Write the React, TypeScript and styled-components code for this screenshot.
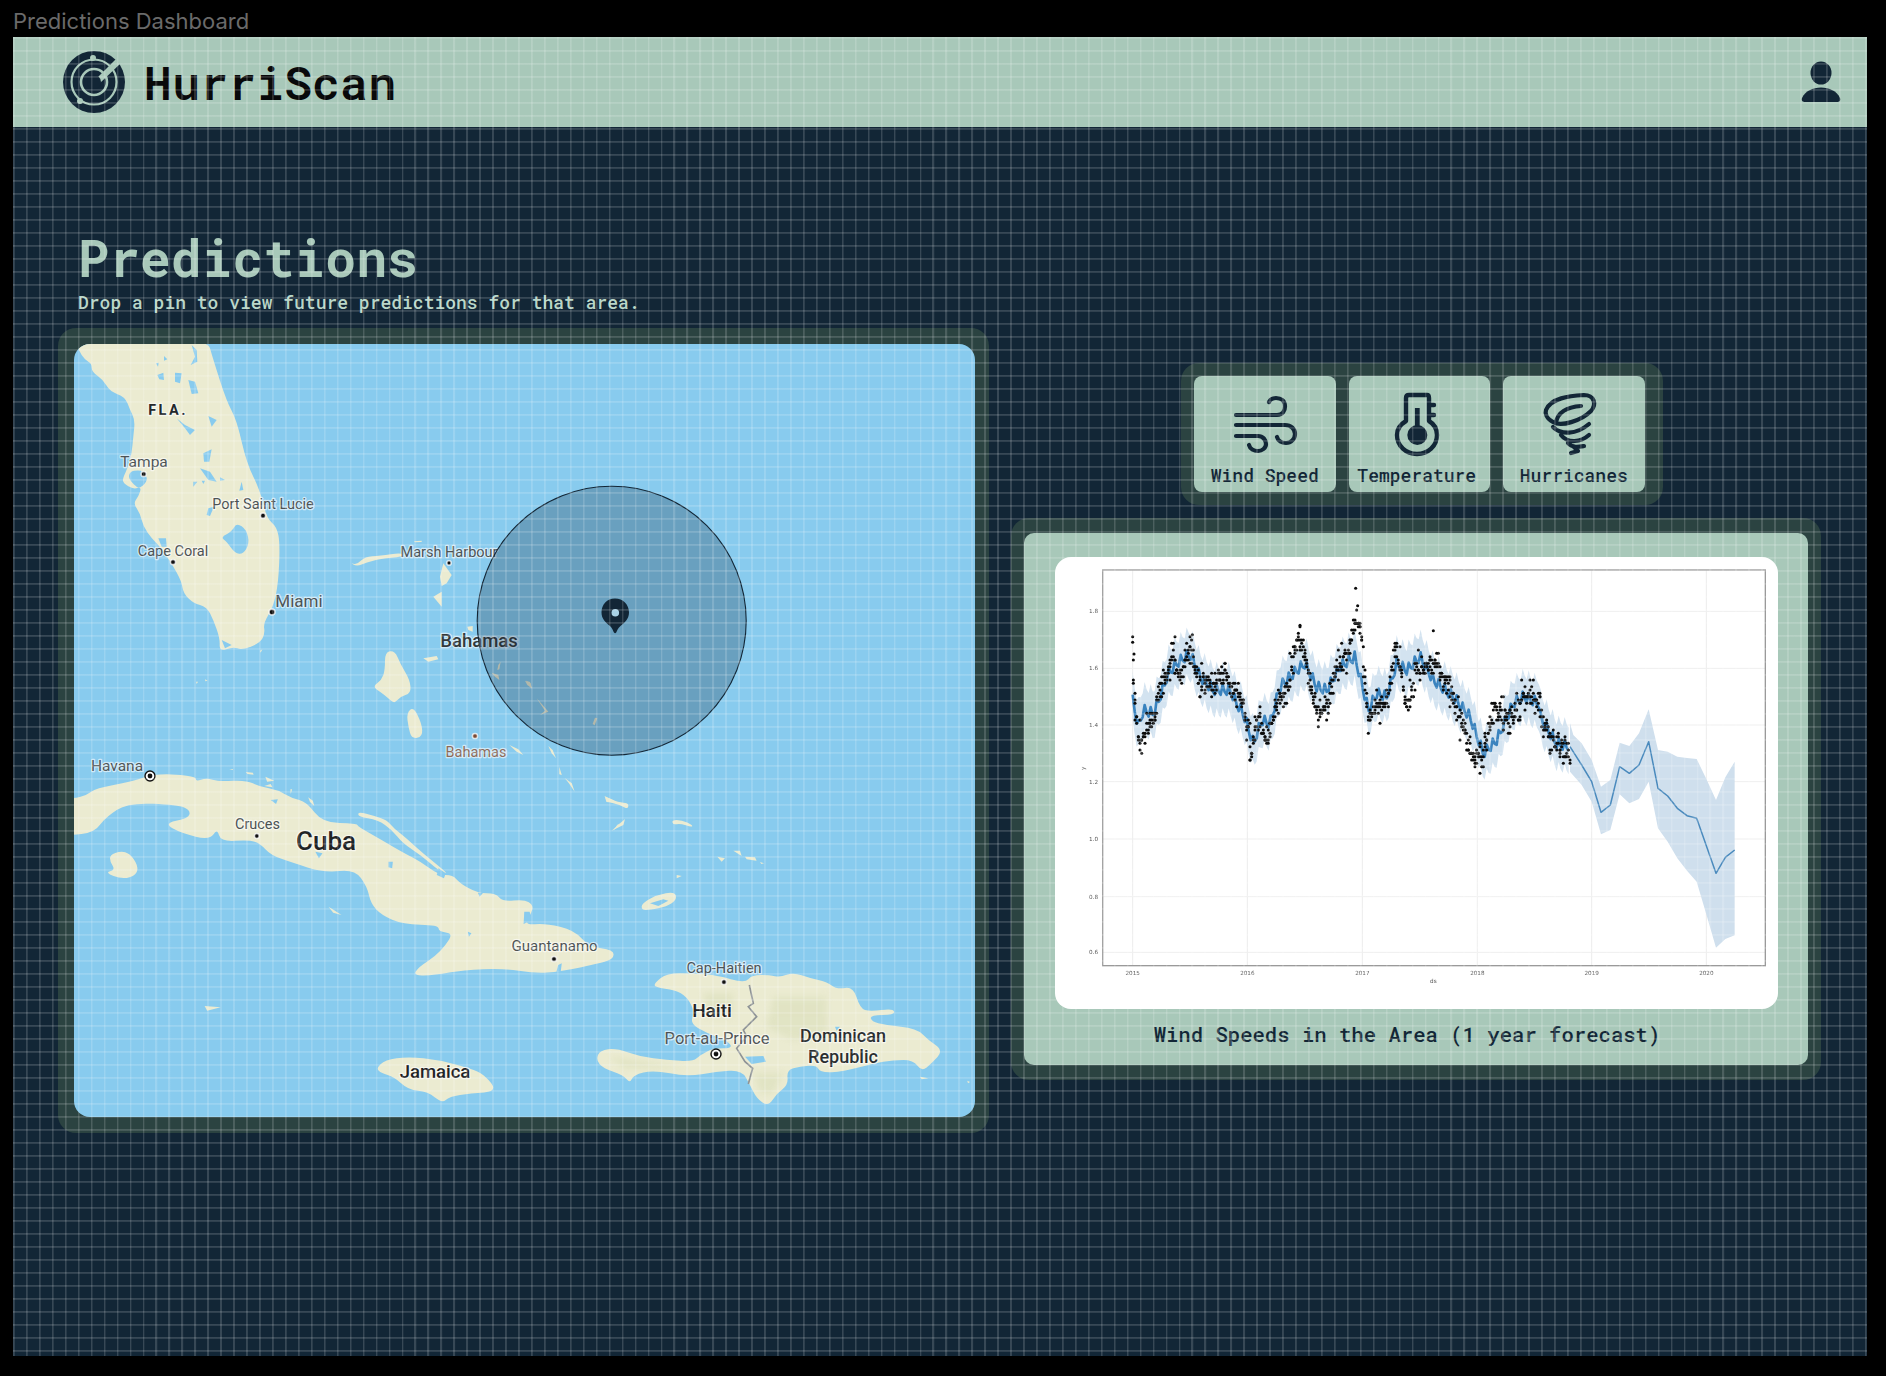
import styled, { createGlobalStyle } from "styled-components"

const NAVY = "#122636"
const SAGE = "#a8c8b9"
const PANEL = "#2b4341"
const MONO = `"Roboto Mono", "DejaVu Sans Mono", "Liberation Mono", monospace`

const GlobalStyle = createGlobalStyle`
  html, body { margin: 0; padding: 0; background: #000; }
`

const Page = styled.div`
  width: 1886px;
  height: 1376px;
  padding-left: 13px;
  box-sizing: border-box;
  background: #000;
  overflow: hidden;
`

const FrameLabel = styled.div`
  height: 37px;
  box-sizing: border-box;
  padding-top: 9px;
  font-family: Inter, "Liberation Sans", sans-serif;
  font-size: 22px;
  line-height: 24px;
  color: #6a6a6a;
`

const Frame = styled.div`
  position: relative;
  width: 1854px;
  height: 1319px;
  background: ${NAVY};
  overflow: hidden;
`

const GridOverlay = styled.div`
  position: absolute;
  inset: 0;
  pointer-events: none;
  background-image:
    repeating-linear-gradient(to right, rgba(255, 255, 255, 0.155) 0, rgba(255, 255, 255, 0.155) 1.3px, transparent 2.3px, transparent 12.95px),
    repeating-linear-gradient(to bottom, rgba(255, 255, 255, 0.155) 0, rgba(255, 255, 255, 0.155) 1.3px, transparent 2.3px, transparent 13px);
`

const Header = styled.header`
  height: 90px;
  box-sizing: border-box;
  padding: 0 26px 0 49px;
  display: flex;
  align-items: center;
  justify-content: space-between;
  background: ${SAGE};
`

const Brand = styled.div`
  display: flex;
  align-items: center;
  gap: 18px;
`

const BrandName = styled.div`
  font-family: ${MONO};
  font-size: 46.7px;
  font-weight: 600;
  line-height: 60px;
  color: #08090a;
`

const Main = styled.main`
  display: flex;
  gap: 22px;
  padding: 0 45px;
`

const LeftColumn = styled.div`
  width: 931px;
  flex: none;
`

const Heading = styled.div`
  height: 201px;
  box-sizing: border-box;
  padding: 101.5px 0 0 20px;
`

const Title = styled.h1`
  margin: 0;
  font-family: ${MONO};
  font-size: 51.5px;
  font-weight: 700;
  line-height: 56px;
  color: ${SAGE};
`

const Subtitle = styled.p`
  margin: 5.5px 0 0;
  font-family: ${MONO};
  font-size: 18px;
  font-weight: 500;
  line-height: 24px;
  color: #b9d6c8;
`

const MapPanel = styled.section`
  padding: 16px 14px 16px 16px;
  border-radius: 18px;
  background: ${PANEL};
`

const ChartPanel = styled.section`
  padding: 15px 13px;
  border-radius: 18px;
  background: ${PANEL};
`

const MapCard = styled.svg`
  display: block;
  width: 901px;
  height: 773px;
  border-radius: 16px;
  background: #88cbee;
`

const Land = styled.g`
  fill: #ebebd1;
  filter: blur(0.3px);
`

const Water = styled.g`
  fill: #88cbee;
`

const Relief = styled.g`
  fill: #d5dbb4;
  filter: blur(9px);
  opacity: 0.45;
`

const MapDot = styled.circle<{ $tone?: string }>`
  fill: ${(p) => p.$tone ?? "#111"};
  stroke: rgba(255, 255, 255, 0.75);
  stroke-width: 1.5px;
`

const CapitalRing = styled.circle`
  fill: #fff;
  stroke: #111;
  stroke-width: 1.4px;
`

const CapitalDot = styled.circle`
  fill: #111;
`

const MapLabel = styled.text<{ $size: number; $weight?: number; $tone?: string; $track?: number }>`
  font-family: Roboto, "Noto Sans", sans-serif;
  font-size: ${(p) => p.$size}px;
  font-weight: ${(p) => p.$weight ?? 400};
  fill: ${(p) => p.$tone ?? "#4c5254"};
  letter-spacing: ${(p) => p.$track ?? 0}px;
  text-anchor: middle;
  paint-order: stroke;
  stroke: rgba(255, 255, 255, 0.6);
  stroke-width: 2.5px;
  stroke-linejoin: round;
`

const RightColumn = styled.div`
  width: 810px;
  flex: none;
  padding-top: 236px;
`

const MetricBar = styled.div`
  width: 482px;
  height: 142px;
  box-sizing: border-box;
  margin: 0 0 13px 170px;
  padding: 13px;
  display: flex;
  gap: 13px;
  border-radius: 18px;
  background: ${PANEL};
`

const MetricButton = styled.button<{ $nudge?: number }>`
  width: 141.5px;
  height: 116px;
  padding: 15px ${(p) => p.$nudge ?? 0}px 0 0;
  border: 0;
  border-radius: 8px;
  display: flex;
  flex-direction: column;
  align-items: center;
  background: ${SAGE};
  font-family: ${MONO};
  font-size: 18px;
  font-weight: 500;
  line-height: 24px;
  color: ${NAVY};
`

const MetricIcon = styled.svg`
  display: block;
  width: 80px;
  height: 68px;
  margin-bottom: 4px;
  fill: none;
  stroke: ${NAVY};
  stroke-linecap: round;
  stroke-linejoin: round;
`

const ChartCard = styled.div`
  padding: 24px 31px 0;
  height: 532px;
  box-sizing: border-box;
  border-radius: 10px;
  background: ${SAGE};
`

const ChartImage = styled.svg`
  display: block;
  width: 723px;
  height: 452px;
  border-radius: 16px;
  background: #fff;
  filter: blur(0.35px);
`

const ChartLabel = styled.text<{ $anchor?: string }>`
  font-family: "DejaVu Sans", sans-serif;
  font-size: 17px;
  fill: #555;
  text-anchor: ${(p) => p.$anchor ?? "middle"};
`

const Caption = styled.div`
  margin-top: 11px;
  padding-right: 18px;
  text-align: center;
  font-family: ${MONO};
  font-size: 20.6px;
  font-weight: 500;
  line-height: 28px;
  color: ${NAVY};
`

type Pt = [number, number]

const poly = (pts: Pt[]) => pts.map((p) => p.join(",")).join(" ")
const shift4 = (pts: Pt[]): Pt[] => pts.map(([x, y]) => [x + 1080, y + 480])

// rounds a traced outline through the midpoints of its edges, small shapes stay as they are
const outline = (pts: Pt[]) => {
  if (pts.length < 6) return `M${pts.join("L")}Z`
  const mid = (a: Pt, b: Pt) => `${(a[0] + b[0]) / 2} ${(a[1] + b[1]) / 2}`
  let d = `M${mid(pts[pts.length - 1], pts[0])}`
  pts.forEach((p, i) => {
    d += `Q${p[0]} ${p[1]} ${mid(p, pts[(i + 1) % pts.length])}`
  })
  return d + "Z"
}

function Shapes({ items }: { items: Pt[][] }) {
  return (
    <>
      {items.map((s, i) => <path key={i} d={outline(s)} />)}
    </>
  )
}

// map shapes, traced in crop coordinates
const florida: Pt[] = [[40,20],[50,30],[55,60],[75,90],[95,100],[95,125],[130,150],[150,185],[195,200],[210,240],[225,270],[220,320],[215,370],[205,410],[188,445],[190,460],[220,478],[245,470],[235,500],[220,520],[240,550],[250,590],[275,625],[300,650],[335,700],[365,755],[370,790],[400,820],[440,830],[460,870],[480,925],[478,965],[520,950],[545,960],[600,940],[615,910],[610,880],[640,830],[655,760],[660,640],[650,590],[620,565],[600,480],[560,400],[530,270],[500,215],[460,90],[440,20]]
const floridaWater: Pt[][] = [
  [[530,578],[560,600],[568,640],[550,672],[525,670],[500,635],[482,622],[515,605]],
  [[210,425],[235,420],[250,425],[265,450],[240,475],[228,470],[205,445]],
  [[345,128],[365,130],[360,160],[345,155]],[[385,150],[405,155],[415,190],[395,192]],
  [[395,45],[410,60],[412,95],[392,105],[405,80]],[[292,135],[310,128],[312,150],[298,148]],
  [[350,265],[375,285],[405,300],[390,315],[375,295]],[[445,258],[470,270],[455,290]],
  [[430,370],[455,358],[448,395],[432,395]],[[420,415],[450,425],[470,455],[445,450]],
  [[400,455],[412,455],[400,470]],[[425,452],[435,452],[430,462]],[[480,442],[495,450],[480,452]],
  [[545,455],[550,480],[538,482]],[[445,535],[462,530],[450,558],[440,555]],
  [[535,290],[560,295],[565,345],[550,345]],[[295,625],[318,625],[320,650],[305,650]],
  [[485,930],[515,945],[495,955]],[[288,100],[296,98],[294,110]],[[312,78],[322,88],[312,92]],
]
const bahamas: Pt[][] = [
  [[870,697],[890,705],[915,680],[960,678],[1025,668],[1030,680],[960,687],[920,697],[890,710]],
  [[1150,700],[1175,735],[1160,760],[1145,768],[1140,740]],
  [[1120,800],[1145,785],[1145,830],[1130,812]],
  [[975,965],[1005,962],[1020,1000],[1050,1050],[1053,1090],[1020,1100],[1003,1122],[980,1100],[960,1085],[938,1070],[965,1050],[975,1020]],
  [[1040,1150],[1060,1130],[1085,1180],[1088,1220],[1055,1227],[1045,1190]],
  [[1090,985],[1130,978],[1135,988],[1105,995]],
  [[1062,634],[1085,632],[1085,636],[1065,637]],
  [[1222,890],[1238,888],[1238,905],[1225,900]],
  [[1315,1005],[1322,995],[1318,1018],[1312,1020]],
  [[1295,1028],[1315,1035],[1318,1050],[1305,1040]],
  [[1395,1052],[1412,1060],[1415,1075],[1402,1065]],
  [[1430,1105],[1448,1125],[1465,1145],[1440,1155],[1455,1142]],
  [[1348,1245],[1375,1258],[1390,1275],[1370,1265]],
  [[1465,1248],[1478,1260],[1488,1285],[1475,1270]],
  [[408,1055],[414,1055],[410,1062]],[[435,1048],[443,1052],[436,1054]],[[600,962],[607,958],[602,968]],
]
const hubIslands: Pt[][] = [
  [[168,632],[180,636],[186,656],[176,645]],
  [[375,743],[382,745],[374,766],[368,762]],
]
const cuba: Pt[] = [[20,172],[40,175],[75,165],[100,145],[200,125],[270,100],[380,108],[380,125],[410,113],[445,125],[520,120],[560,140],[610,150],[650,175],[690,185],[735,248],[830,250],[835,260],[900,300],[965,340],[1010,365],[1060,405],[1100,405],[1120,430],[1170,460],[1220,460],[1240,485],[1300,478],[1325,495],[1320,520],[1300,555],[1360,550],[1440,570],[1480,620],[1550,630],[1550,655],[1520,668],[1400,695],[1330,700],[1240,685],[1130,690],[1050,705],[988,708],[1005,680],[1050,650],[1080,615],[1100,580],[1060,575],[1060,555],[960,553],[900,525],[870,490],[860,440],[825,388],[740,398],[650,368],[590,345],[560,310],[530,300],[450,305],[440,265],[420,300],[340,280],[290,250],[360,235],[365,210],[330,195],[190,188],[130,230],[105,265],[80,280],[40,284],[20,286]]
const cubaWater: Pt[][] = [
  [[1300,515],[1315,515],[1322,540],[1298,552]],[[920,365],[932,365],[930,385],[920,382]],
  [[1142,575],[1152,580],[1145,590]],[[715,335],[735,340],[725,355]],[[590,180],[610,178],[605,192]],
  [[1395,675],[1405,670],[1402,695],[1390,695]],[[1170,458],[1185,458],[1175,470]],
  [[1060,385],[1080,400],[1075,415],[1055,405]],
]
const cubaCays: Pt[][] = [
  [[835,215],[880,228],[915,240],[935,265],[970,295],[1000,325],[1040,360],[1090,405],[1060,392],[1010,345],[960,310],[930,270],[890,240],[835,230]],
  [[520,96],[540,98],[542,104],[525,102]],[[575,110],[600,122],[580,125]],[[572,138],[590,132],[595,142]],
  [[695,172],[708,182],[712,198],[700,186]],[[645,148],[650,148],[646,162]],[[474,87],[484,87],[484,90]],
  [[140,345],[170,333],[195,340],[218,375],[215,405],[175,418],[125,398],[155,390],[140,365]],
  [[405,798],[450,802],[412,812]],[[752,500],[770,512],[788,525],[765,518]],
  [[885,985],[910,960],[975,950],[1060,960],[1150,985],[1190,1005],[1225,1055],[1150,1060],[1090,1070],[1070,1090],[1030,1055],[975,1050],[935,1010],[900,1000]],
  [[1398,80],[1405,105],[1398,103]],[[1413,114],[1433,130],[1441,155],[1425,130]],
  [[1525,168],[1565,190],[1530,186]],[[1560,255],[1568,250],[1550,272]],
]
const hispaniola: Pt[] = [[283,730],[320,700],[400,700],[470,705],[555,730],[575,705],[630,705],[660,712],[700,697],[750,715],[800,725],[830,748],[880,740],[900,805],[930,815],[1000,805],[1005,825],[930,825],[935,845],[975,855],[1070,865],[1105,900],[1150,932],[1115,970],[1085,995],[1060,960],[1000,960],[940,970],[850,995],[780,998],[770,975],[720,980],[680,990],[685,1035],[650,1060],[625,1100],[590,1075],[570,1035],[545,990],[470,995],[380,1010],[280,990],[220,1005],[210,1030],[190,1005],[130,985],[108,960],[120,930],[170,925],[240,950],[320,960],[400,965],[420,945],[460,925],[520,925],[500,900],[440,880],[390,850],[405,815],[380,770],[345,750],[285,742]]
const eastIslands: Pt[][] = [
  [[245,490],[290,465],[345,455],[350,480],[320,500],[270,510],[245,510]],
  [[135,168],[175,188],[205,188],[205,208],[180,195],[140,185]],[[155,272],[195,237],[190,255]],
  [[335,240],[365,240],[398,255],[395,262],[360,250],[340,255]],[[472,350],[495,355],[485,365]],
  [[520,332],[540,332],[545,348]],[[555,350],[585,352],[590,362],[560,358]],[[600,366],[612,370],[604,372]],
  [[350,405],[365,408],[350,415]],[[1080,1010],[1105,1015],[1085,1018]],[[1222,1022],[1230,1026],[1224,1030]],
]
const reliefPatches: Pt[][] = [
  [[640,770],[800,770],[800,880],[700,900],[620,860]],[[580,1000],[670,1000],[640,1060],[600,1060]],
  [[150,950],[260,965],[380,985],[280,985],[190,985]],[[430,760],[520,760],[520,830],[440,830]],
]

// chart data, in crop coordinates of the chart image
const history: Pt[] = [[278,480],[295,560],[310,510],[340,520],[360,470],[385,400],[410,370],[450,340],[480,410],[520,450],[570,450],[590,490],[610,520],[640,610],[665,540],[690,550],[720,440],[760,400],[795,370],[830,440],[860,450],[900,380],[945,350],[985,510],[1010,460],[1040,470],[1070,370],[1100,390],[1140,350],[1180,420],[1240,470],[1290,530],[1330,640],[1370,600],[1420,490],[1450,470],[1500,490],...shift4([[420,50],[450,100],[470,130],[510,140]])]
const observed: Pt[] = [[280,420],[290,560],[297,610],[320,575],[340,525],[360,450],[375,420],[400,340],[420,410],[450,320],[460,370],[480,420],[520,450],[540,400],[560,395],[575,440],[610,480],[625,590],[635,650],[650,530],[680,600],[715,480],[745,440],[760,340],[775,275],[795,340],[815,470],[835,530],[860,500],[895,370],[925,340],[950,240],[965,300],[985,550],[1010,490],[1040,500],[1065,320],[1085,400],[1100,510],[1130,390],[1180,360],[1220,430],[1260,540],[1300,640],[1330,640],[1360,510],[1420,530],[1450,465],[1500,480],...shift4([[425,50],[450,110],[480,150],[510,150]])]
const extraDots: Pt[] = [[278,290],[278,307],[282,342],[947,145],[953,197],[1180,272],[457,284],[405,290],[780,256]]
const forecast = shift4([[510,140],[545,195],[575,245],[603,337],[631,315],[659,200],[688,220],[717,195],[746,125],[774,265],[803,288],[832,325],[861,347],[890,355],[948,520],[976,472],[1004,450]])
const forecastUpper = shift4([[510,70],[520,105],[545,130],[575,180],[603,260],[631,240],[659,128],[688,138],[717,100],[746,28],[774,150],[803,155],[832,170],[861,174],[890,177],[918,235],[948,300],[976,232],[1004,185]])
const forecastLower = shift4([[510,215],[545,255],[575,305],[603,403],[631,390],[659,283],[688,310],[717,297],[746,245],[774,385],[803,425],[832,475],[861,512],[890,545],[918,640],[948,743],[976,717],[1004,706]])

const at = (line: Pt[], x: number) => {
  for (let i = 1; i < line.length; i++) {
    if (x <= line[i][0]) {
      const [x0, y0] = line[i - 1]
      const [x1, y1] = line[i]
      return y0 + ((y1 - y0) * (x - x0)) / (x1 - x0)
    }
  }
  return line[line.length - 1][1]
}

let seed = 42
const rnd = () => {
  seed = (seed * 16807) % 2147483647
  return seed / 2147483647
}

const buildChart = () => {
  const upper: Pt[] = []
  const lower: Pt[] = []
  const line: Pt[] = []
  const first = history[0][0]
  const last = history[history.length - 1][0]
  for (let x = first, i = 0; x <= last; x += 6, i++) {
    const y = at(history, x)
    const wob = i % 3 === 0 ? -9 : i % 3 === 1 ? 3 : 8
    line.push([x, y + wob * 1.8])
    upper.push([x, y - 70 + wob * 1.7])
    lower.push([x, y + 70 + wob * 1.7])
  }
  const dots: Pt[] = [...extraDots]
  for (let x = first; x <= last; x += 1.5) {
    const y = at(observed, x)
    const row = Math.round((y + (rnd() - 0.5) * (rnd() * 130)) / 10) * 10
    dots.push([Math.round(x / 5) * 5, row])
  }
  return {
    band: poly([...upper, ...[...lower].reverse()]),
    line: poly(line),
    dots,
  }
}

const chart = buildChart()
const yTicks: [string, number][] = [["1.8", 214], ["1.6", 385], ["1.4", 555], ["1.2", 725], ["1.0", 897], ["0.8", 1070], ["0.6", 1237]]
const xTicks: [string, number][] = [["2015", 278], ["2016", 622], ["2017", 967], ["2018", 1312], ["2019", 1655], ["2020", 1999]]

const places: { x: number; y: number; r: number; tone?: string }[] = [
  { x: 143.7, y: 474, r: 2.6 },
  { x: 263, y: 515.7, r: 2.6 },
  { x: 173, y: 562, r: 2.6 },
  { x: 272, y: 612, r: 3 },
  { x: 449, y: 563, r: 2.2 },
  { x: 475, y: 736, r: 2.6, tone: "#7a4a35" },
  { x: 256.8, y: 836, r: 2.4 },
  { x: 554, y: 959, r: 2.6 },
  { x: 724, y: 982, r: 2.6 },
]
const capitals: Pt[] = [[150, 776], [716, 1054]]

function LogoIcon() {
  return (
    <svg width="64" height="64" viewBox="7 7 64 64">
      <circle cx="39" cy="39" r="31" fill={NAVY} />
      <circle cx="39" cy="39" r="22.5" fill="none" stroke={SAGE} strokeWidth="2.2" />
      <circle cx="39" cy="39" r="13" fill="none" stroke={SAGE} strokeWidth="2.6" />
      <path d="M42 35 L61 16 L65 21 L45 40 Z" fill={SAGE} />
      <circle cx="39" cy="39" r="7" fill={NAVY} />
      <circle cx="38" cy="15" r="3" fill={SAGE} />
      <circle cx="25" cy="58" r="3" fill={SAGE} />
    </svg>
  )
}

function UserIcon() {
  return (
    <svg width="40" height="42" viewBox="0 0 40 42">
      <ellipse cx="20" cy="12" rx="10.5" ry="11.5" fill={NAVY} />
      <path d="M1 37 C4 30 12 26.5 20 26.5 C28 26.5 36 30 39 37 C40 40 38 41 36 41 L4 41 C2 41 0 40 1 37 Z" fill={NAVY} />
    </svg>
  )
}

function WindIcon() {
  return (
    <MetricIcon viewBox="0 0 80 68" strokeWidth="4.2">
      <path d="M11 24 L52 24 C58 24 60 19 60 15.5 C60 10 56 7 51 7 C47 7 45 9 44 11" />
      <path d="M11 34 L60 34 C66 34 70 38 70 43 C70 48 66 52 61 52 C57 52 53 50 52 46" />
      <path d="M11 45 L33 45 C38 45 41 49 41 53 C41 57 37 60 33 60 C29 60 25 58 24 54" />
    </MetricIcon>
  )
}

function ThermometerIcon() {
  return (
    <MetricIcon viewBox="0 0 80 68" strokeWidth="4.4">
      <path d="M29 30 L29 7 C29 5 30 4 32 4 L50 4 C52 4 52 5 52 7 L52 30 C57 33 60 38 60 44 C60 55 51 63 40 63 C29 63 20 55 20 44 C20 38 24 33 29 30 Z" />
      <path d="M53 14 L57 14 M53 24 L57 24" />
      <path d="M40.3 17 L40.3 40" strokeWidth="4.8" strokeLinecap="butt" />
      <circle cx="40.3" cy="44" r="10" fill={NAVY} stroke="none" />
    </MetricIcon>
  )
}

function TornadoIcon() {
  return (
    <MetricIcon viewBox="0 0 80 68" strokeWidth="4.2">
      <path d="M12 19 C17 7 35 5 50 4 C60 4 63 13 57 20 C47 30 27 36 19 31 C12 27 11 22 12 19 Z" />
      <path d="M22 31 C24 22 32 16 47 15" />
      <path d="M19 36 C27 44 42 44 55 33" />
      <path d="M27 44 C34 53 47 51 55 44" />
      <path d="M34 52 C39 57 44 56 50 55" />
      <path d="M40 56 L44 60 L37 62" />
    </MetricIcon>
  )
}

export default function App() {
  return (
    <Page>
      <GlobalStyle />
      <FrameLabel>Predictions Dashboard</FrameLabel>
      <Frame>
        <Header>
          <Brand>
            <LogoIcon />
            <BrandName>HurriScan</BrandName>
          </Brand>
          <UserIcon />
        </Header>
        <Main>
          <LeftColumn>
            <Heading>
              <Title>Predictions</Title>
              <Subtitle>Drop a pin to view future predictions for that area.</Subtitle>
            </Heading>
            <MapPanel>
              <MapCard viewBox="74 344 901 773">
                <g transform="translate(60 330) scale(0.33333)">
                  <Land>
                    <Shapes items={[florida, ...bahamas]} />
                  </Land>
                  <Water>
                    <Shapes items={floridaWater} />
                  </Water>
                </g>
                <g transform="translate(470 470) scale(0.33333)">
                  <Land>
                    <Shapes items={hubIslands} />
                  </Land>
                </g>
                <g transform="translate(60 740) scale(0.35714 0.33333)">
                  <Land>
                    <Shapes items={[cuba, ...cubaCays]} />
                  </Land>
                  <Water>
                    <Shapes items={cubaWater} />
                  </Water>
                </g>
                <g transform="translate(560 740) scale(0.33333)">
                  <Land>
                    <Shapes items={[hispaniola, ...eastIslands]} />
                  </Land>
                  <Relief>
                    <Shapes items={reliefPatches} />
                  </Relief>
                  <Water>
                    <polygon points="555,950 610,948 618,965 575,972" />
                    <polygon points="825,860 840,860 830,872" />
                    <polygon points="270,490 310,478 325,482 295,498" />
                  </Water>
                  <polyline points="568,735 580,790 565,800 590,830 550,870 560,890 530,925 555,965 578,985 565,1032" fill="none" stroke="#8e9396" strokeWidth="5" />
                </g>

                {places.map((p) => <MapDot key={`${p.x}-${p.y}`} cx={p.x} cy={p.y} r={p.r} $tone={p.tone} />)}
                {capitals.map(([x, y]) => (
                  <g key={x}>
                    <CapitalRing cx={x} cy={y} r="5" />
                    <CapitalDot cx={x} cy={y} r="2.4" />
                  </g>
                ))}

                <MapLabel x="168" y="415" $size={14.5} $weight={700} $track={2.4} $tone="#23282b">FLA.</MapLabel>
                <MapLabel x="144" y="467" $size={15.5}>Tampa</MapLabel>
                <MapLabel x="263" y="509" $size={14.5}>Port Saint Lucie</MapLabel>
                <MapLabel x="173" y="556" $size={14.5}>Cape Coral</MapLabel>
                <MapLabel x="299" y="607" $size={17}>Miami</MapLabel>
                <MapLabel x="449" y="557" $size={14.5}>Marsh Harbour</MapLabel>
                <MapLabel x="479" y="647" $size={18.5} $weight={500} $tone="#33383a">Bahamas</MapLabel>
                <MapLabel x="476" y="757" $size={14.5} $tone="#8c6a58">Bahamas</MapLabel>
                <MapLabel x="117" y="771" $size={15.5}>Havana</MapLabel>
                <MapLabel x="257.5" y="829" $size={14.5}>Cruces</MapLabel>
                <MapLabel x="326" y="850" $size={26} $weight={500} $tone="#1f2325">Cuba</MapLabel>
                <MapLabel x="554.6" y="951" $size={15}>Guantanamo</MapLabel>
                <MapLabel x="435" y="1078" $size={18.5} $weight={500} $tone="#1f2325">Jamaica</MapLabel>
                <MapLabel x="724" y="973" $size={14.5}>Cap-Haitien</MapLabel>
                <MapLabel x="712" y="1017" $size={19} $weight={500} $tone="#1f2325">Haiti</MapLabel>
                <MapLabel x="717" y="1044" $size={16.5}>Port-au-Prince</MapLabel>
                <MapLabel x="843" y="1042" $size={18} $weight={500} $tone="#2a2e30">Dominican</MapLabel>
                <MapLabel x="843" y="1063" $size={18} $weight={500} $tone="#2a2e30">Republic</MapLabel>

                <circle cx="611.7" cy="620.7" r="134.5" fill="rgba(18, 38, 58, 0.26)" stroke={NAVY} strokeWidth="1.1" />
                <path d="M615 598.5 C607 598.5 601.5 604.5 601.5 612.5 C601.5 619 606 623 610 626 C612.5 628 613 631 614 632.5 C614.6 633.5 615.6 633.5 616.2 632.5 C617 631 617.8 628 620.5 626 C624.5 623 629 619 629 612.5 C629 604.5 623 598.5 615 598.5 Z" fill={NAVY} />
                <circle cx="615.3" cy="612.7" r="3.8" fill="#a8d2e6" />
              </MapCard>
            </MapPanel>
          </LeftColumn>
          <RightColumn>
            <MetricBar>
              <MetricButton>
                <WindIcon />
                Wind Speed
              </MetricButton>
              <MetricButton $nudge={5}>
                <ThermometerIcon />
                Temperature
              </MetricButton>
              <MetricButton>
                <TornadoIcon />
                Hurricanes
              </MetricButton>
            </MetricBar>
            <ChartPanel>
              <ChartCard>
                <ChartImage viewBox="45 51 2169 1356">
                  {xTicks.map(([t, x]) => (
                    <g key={t}>
                      <line x1={x} x2={x} y1="90" y2="1277" stroke="#ececec" strokeWidth="3" />
                      <ChartLabel x={x} y="1304">{t}</ChartLabel>
                    </g>
                  ))}
                  {yTicks.map(([t, y]) => (
                    <g key={t}>
                      <line x1="188" x2="2176" y1={y} y2={y} stroke="#efefef" strokeWidth="3" />
                      <ChartLabel x="174" y={y + 6} $anchor="end">{t}</ChartLabel>
                    </g>
                  ))}
                  <rect x="188" y="90" width="1988" height="1187" fill="none" stroke="#9a9a9a" strokeWidth="4" />
                  <ChartLabel x="1180" y="1330">ds</ChartLabel>
                  <ChartLabel x="0" y="0" transform="translate(134 685) rotate(-90)">y</ChartLabel>
                  <polygon points={chart.band} fill="#d3e3f0" />
                  <polygon points={poly([...forecastUpper, ...[...forecastLower].reverse()])} fill="#cfdfed" />
                  <polyline points={chart.line} fill="none" stroke="#3a83be" strokeWidth="8" strokeLinejoin="round" />
                  <polyline points={poly(forecast)} fill="none" stroke="#4a8abd" strokeWidth="4.5" strokeLinejoin="round" />
                  {chart.dots.map(([x, y], i) => (
                    <circle key={i} cx={x} cy={y} r="4.6" fill="#0c0c0c" />
                  ))}
                </ChartImage>
                <Caption>Wind Speeds in the Area (1 year forecast)</Caption>
              </ChartCard>
            </ChartPanel>
          </RightColumn>
        </Main>
        <GridOverlay />
      </Frame>
    </Page>
  )
}
